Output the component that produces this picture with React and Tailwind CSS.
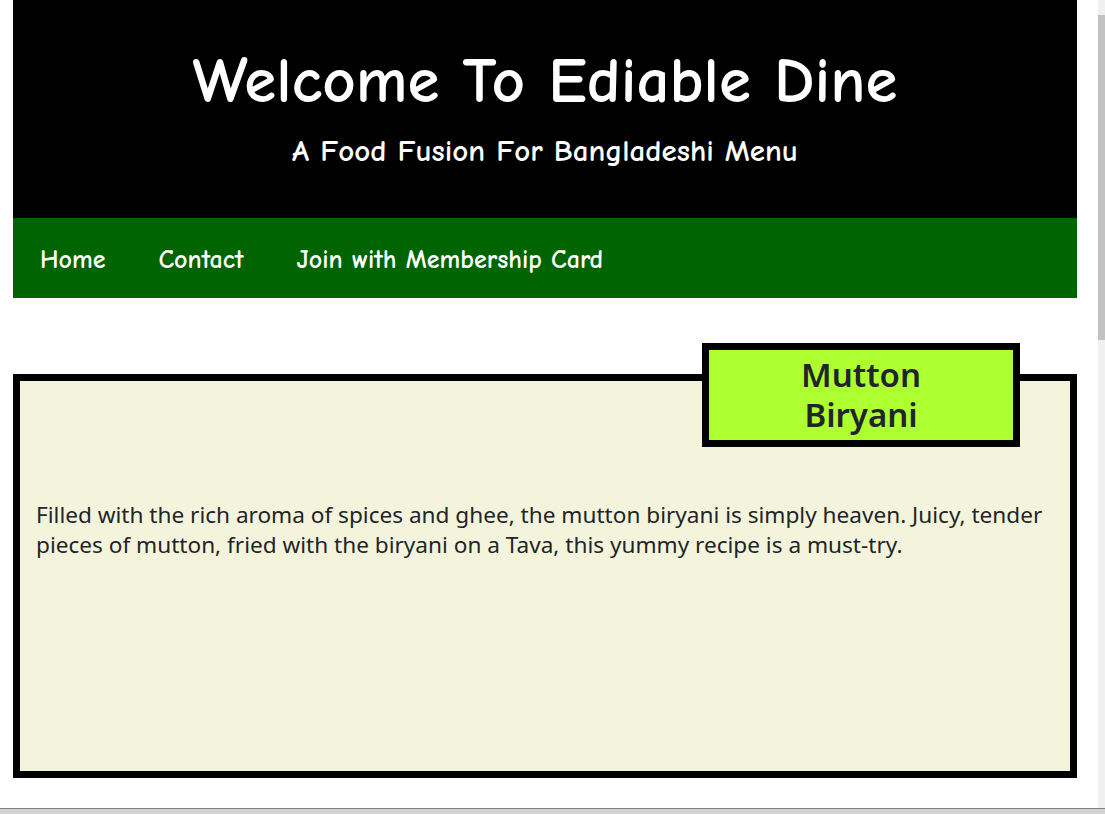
import React from 'react';

const comic = "font-['Comic_Sans_MS','Comic_Neue','Noto_Sans',sans-serif] font-bold";

const Header = () => (
    <header className={`bg-black text-white text-center h-[218px] flex flex-col items-center pt-[41px] ${comic}`}>
        <h1 className="text-[65px] leading-[80px]">Welcome To Ediable Dine</h1>
        <h2 className="text-[31px] leading-[38px] mt-[11px]">A Food Fusion For Bangladeshi Menu</h2>
    </header>
);

const NavBar = () => {
    const links = ['Home', 'Contact', 'Join with Membership Card'];
    return (
        <nav className={`bg-[#006400] h-[80px] flex items-center pl-[27px] gap-[53px] ${comic}`}>
            {links.map((link) => (
                <a key={link} href="#" className="text-white text-[26px] leading-[32px] pt-[3px]">
                    {link}
                </a>
            ))}
        </nav>
    );
};

const DishCard = () => (
    <div className="relative mt-[76px] border-[7px] border-black bg-[#f4f4dc] h-[404px] font-['Segoe_UI','Noto_Sans',sans-serif] text-[#212529]">
        <div className="absolute left-[682px] top-[-38px] w-[318px] h-[104px] border-[7px] border-black bg-[#adff2f] flex items-center justify-center text-center">
            <h3 className="text-[33px] leading-[40px] font-semibold">Mutton<br />Biryani</h3>
        </div>
        <p className="pt-[119px] px-[16px] text-[22.6px] leading-[30px]">
            Filled with the rich aroma of spices and ghee, the mutton biryani is simply heaven. Juicy, tender
            pieces of mutton, fried with the biryani on a Tava, this yummy recipe is a must-try.
        </p>
    </div>
);

const App = () => {
    return (
        <div className="w-[1105px] h-[814px] overflow-hidden flex flex-col bg-white">
            <div className="flex flex-1">
                <div className="w-[1098px] pl-[13px]">
                    <div className="w-[1064px]">
                        <Header />
                        <NavBar />
                        <DishCard />
                    </div>
                </div>
                <div className="w-[7px] bg-[#f0f0f0] pt-[15px]">
                    <div className="h-[325px] bg-[#c2c2c2]"></div>
                </div>
            </div>
            <div className="h-[6px] border-t border-[#808080] bg-[#d4d4d4]"></div>
        </div>
    );
};

export default App;
